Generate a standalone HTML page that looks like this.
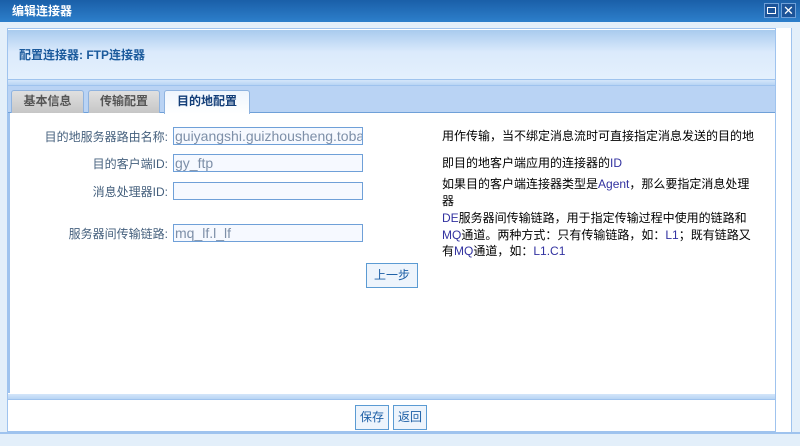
<!DOCTYPE html>
<html><head><meta charset="utf-8"><style>
*{margin:0;padding:0;box-sizing:border-box}
body{width:800px;height:446px;overflow:hidden;background:#e3effa;font-family:"Liberation Sans","Noto Sans CJK SC",sans-serif;font-size:12px;position:relative}
.a{position:absolute}
#title{left:0;top:0;width:800px;height:22px;background:linear-gradient(#1a5fa8,#2d7fcb);color:#fff;font-weight:bold;font-size:12px;line-height:22px;padding-left:12px}
.wb{top:3px;width:15px;height:15px;background:#1c5499;border:1px solid #6fa0d8}
#right{left:776px;top:28px;width:16px;height:404px;background:#fff;border-right:1px solid #9fc3ee}
#panel{left:7px;top:28px;width:769px;height:404px;border:1px solid #9fc3ee;background:#fff}
#hdr{left:8px;top:30px;width:767px;height:50px;background:linear-gradient(#a9cbee,#dbeafc 45%,#e4f0fd);color:#1b5a9c;font-weight:bold;line-height:50px;padding-left:11px;font-size:12px;border-bottom:1px solid #9fc3ee}
.split{left:8px;width:767px;height:6px;background:linear-gradient(#d4e6fa,#b8d4f4);border-bottom:1px solid #9fc3ee}
#tabs{left:8px;top:86px;width:767px;height:27px;background:#b9d3f4;border-bottom:1px solid #6fa0d8}
.tab{top:90px;height:23px;border:1px solid #8fb3df;border-bottom:none;border-radius:3px 3px 0 0;background:linear-gradient(#e0e0e0,#c6c6c6);color:#555;font-weight:bold;text-align:center;line-height:21px}
.lbl{width:160px;left:8px;text-align:right;color:#45607d;font-size:12px}
.inp{left:173px;width:190px;height:18px;border:1px solid #6fa0d8;background:#f6f9ff;color:#7d8fa8;font-size:14px;line-height:16px;padding-left:1px;overflow:hidden;white-space:nowrap}
.d{left:442px;color:#000;font-size:12px;line-height:16.5px;width:315px}
.d b{font-weight:normal;color:#3232a0}
.btn{height:25px;border:1px solid #5b9bd3;background:#edf4fc;color:#1d5fa6;text-align:center;line-height:23px;font-size:12px}
#lbar{left:8px;top:113px;width:2px;height:280px;background:#9fc3ee}
</style></head><body>
<div class="a" id="title">编辑连接器</div>
<div class="a wb" style="left:764px"><div style="margin:3px 2px;width:9px;height:7px;border:1px solid #fff"></div></div>
<div class="a wb" style="left:781px;color:#fff;text-align:center;line-height:13px;font-size:13px">✕</div>
<div class="a" id="right"></div>
<div class="a" id="panel"></div>
<div class="a" id="hdr">配置连接器: FTP连接器</div>
<div class="a split" style="top:80px"></div>
<div class="a" id="tabs"></div>
<div class="a tab" style="left:11px;width:73px">基本信息</div>
<div class="a tab" style="left:88px;width:72px">传输配置</div>
<div class="a tab" style="left:164px;width:86px;height:24px;background:linear-gradient(#eef5fd,#fff);color:#133e78">目的地配置</div>
<div class="a" id="lbar"></div>
<div class="a lbl" style="top:128px">目的地服务器路由名称:</div>
<div class="a inp" style="top:127px">guiyangshi.guizhousheng.tobacco</div>
<div class="a lbl" style="top:155px">目的客户端ID:</div>
<div class="a inp" style="top:154px">gy_ftp</div>
<div class="a lbl" style="top:183px">消息处理器ID:</div>
<div class="a inp" style="top:182px"></div>
<div class="a lbl" style="top:225px">服务器间传输链路:</div>
<div class="a inp" style="top:224px">mq_lf.l_lf</div>
<div class="a btn" style="left:366px;top:263px;width:52px">上一步</div>
<div class="a d" style="top:128px;width:340px">用作传输，当不绑定消息流时可直接指定消息发送的目的地</div>
<div class="a d" style="top:155px">即目的地客户端应用的连接器的<b>ID</b></div>
<div class="a d" style="top:176px">如果目的客户端连接器类型是<b>Agent</b>，那么要指定消息处理器</div>
<div class="a d" style="top:210px"><b>DE</b>服务器间传输链路，用于指定传输过程中使用的链路和<b>MQ</b>通道。两种方式：只有传输链路，如：<b>L1</b>；既有链路又有<b>MQ</b>通道，如：<b>L1.C1</b></div>
<div class="a split" style="top:394px"></div>
<div class="a btn" style="left:355px;top:405px;width:34px">保存</div>
<div class="a btn" style="left:393px;top:405px;width:34px">返回</div>
<div class="a" style="left:0;top:432px;width:800px;height:14px;background:#e3effa;border-top:2px solid #9fc3ee"></div>
</body></html>
